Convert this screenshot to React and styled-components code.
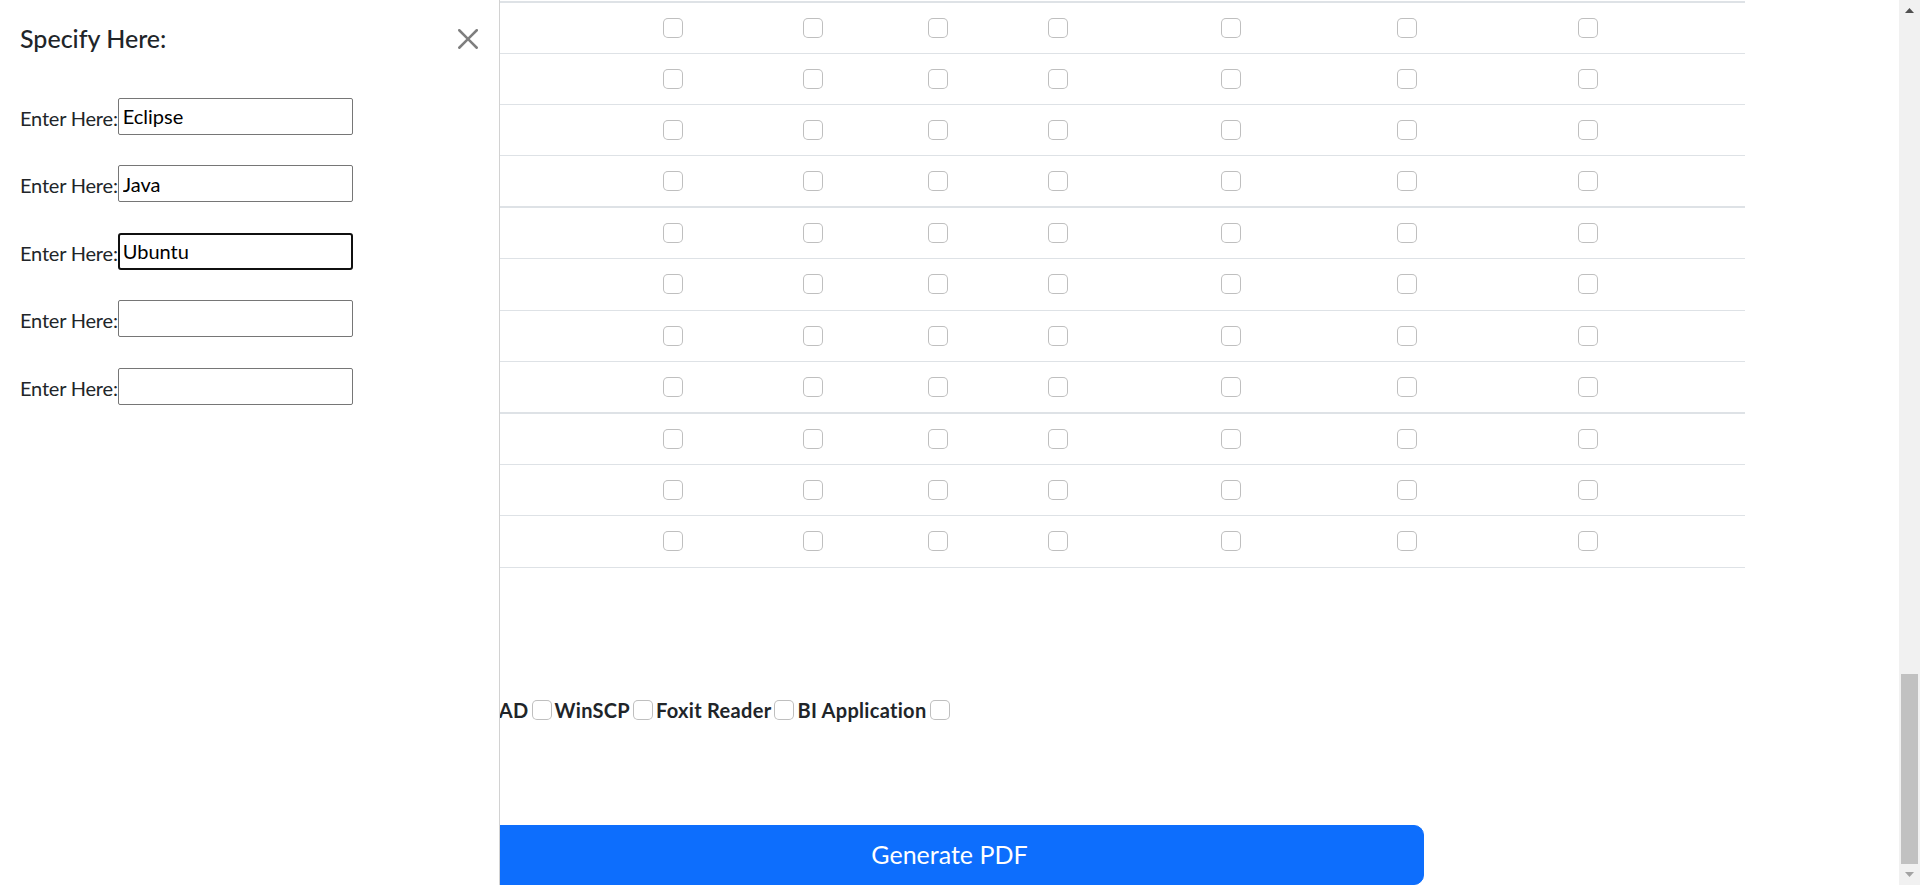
import React, { useLayoutEffect, useRef } from 'react';
import styled, { createGlobalStyle } from 'styled-components';

const GlobalStyle = createGlobalStyle`
  html, body {
    margin: 0;
    padding: 0;
    height: 100%;
    overflow: hidden;
  }
  body {
    font-family: Lato, "Segoe UI", "Liberation Sans", sans-serif;
    color: #212529;
    background: #fff;
  }
  * { box-sizing: border-box; }
`;

const Shell = styled.div`
  display: flex;
  height: 100vh;
`;

const Viewport = styled.div`
  flex: 1;
  min-width: 0;
  overflow-y: scroll;
  scrollbar-width: none;

  &::-webkit-scrollbar {
    display: none;
  }
`;

const ScrollBar = styled.div`
  width: 21px;
  flex-shrink: 0;
  background: #f1f1f1;
  display: flex;
  flex-direction: column;
`;

const ScrollArrow = styled.div`
  height: 21px;
  display: flex;
  align-items: center;
  justify-content: center;

  svg {
    width: 9px;
    height: 5px;
    fill: ${p => (p.$disabled ? '#a3a3a3' : '#505050')};
  }
`;

const ScrollTrack = styled.div`
  flex: 1;
  padding: 0 2px;
  display: flex;
  flex-direction: column;
  justify-content: flex-end;
`;

const ScrollThumb = styled.div`
  height: 190px;
  background: #c1c1c1;
`;

const Page = styled.main`
  padding-top: 40px;
`;

const Heading = styled.h2`
  margin: 0 0 40px;
  font-size: 36px;
  line-height: 45px;
  font-weight: 500;
  text-align: center;
`;

const Table = styled.table`
  width: 1591px;
  margin: 0 auto;
  border-collapse: collapse;
  table-layout: fixed;
  font-size: 20px;
`;

const HeadCell = styled.th`
  padding: 10px;
  line-height: 30px;
  font-weight: 700;
  text-align: ${p => (p.$left ? 'left' : 'center')};
  white-space: nowrap;
  overflow: hidden;
  text-overflow: ellipsis;
  border-bottom: 2px solid #dee2e6;
`;

const Row = styled.tr`
  & > td {
    border-bottom: 1px solid #dee2e6;
    border-top: ${p => (p.$groupStart ? '2px solid #dee2e6' : 'none')};
  }
`;

const Cell = styled.td`
  padding: 15px 10px 15.2px;
  line-height: 20px;
  text-align: ${p => (p.$left ? 'left' : 'center')};
  white-space: nowrap;
  overflow: hidden;
`;

const Check = styled.input.attrs({ type: 'checkbox' })`
  appearance: none;
  -webkit-appearance: none;
  display: ${p => (p.$inline ? 'inline-block' : 'block')};
  width: 20px;
  height: 20px;
  margin: ${p => (p.$inline ? '0' : '0 auto')};
  background: #fff;
  border: 1px solid rgba(0, 0, 0, 0.25);
  border-radius: 5px;
  flex-shrink: 0;
`;

const OptionsRow = styled.div`
  width: 50%;
  height: 30px;
  margin: 127px 0 100px;
  display: flex;
  justify-content: flex-end;
  align-items: center;
  gap: 3px;
`;

const OptionLabel = styled.span`
  font-size: 20px;
  font-weight: 700;
  line-height: 30px;
  letter-spacing: 0.3px;
  white-space: nowrap;
`;

const GenerateButton = styled.button`
  display: block;
  width: 50%;
  height: 60px;
  margin: 0 auto;
  padding: 10px 20px;
  background: #0d6efd;
  border: 1px solid #0d6efd;
  border-radius: 10px;
  color: #fff;
  font-family: inherit;
  font-size: 25px;
  line-height: 37.5px;
  cursor: pointer;
`;

const Offcanvas = styled.aside`
  position: fixed;
  top: 0;
  left: 0;
  bottom: 0;
  width: 500px;
  z-index: 10;
  background: #fff;
  border-right: 1px solid rgba(0, 0, 0, 0.175);
  display: flex;
  flex-direction: column;
`;

const OffcanvasHeader = styled.div`
  display: flex;
  align-items: center;
  justify-content: space-between;
  padding: 20px;
`;

const OffcanvasTitle = styled.h5`
  margin: 0;
  font-size: 25px;
  font-weight: 500;
  line-height: 1.5;
`;

const CloseButton = styled.button`
  width: 20px;
  height: 20px;
  padding: 0;
  margin-right: 1px;
  border: 0;
  background: transparent;
  opacity: 0.5;
  cursor: pointer;
  display: flex;

  svg {
    width: 20px;
    height: 20px;
  }
`;

const OffcanvasBody = styled.div`
  flex: 1;
  padding: 20px;
  display: flex;
  flex-direction: column;
  gap: 30.5px;
`;

const FieldRow = styled.div`
  display: flex;
  align-items: center;
  height: 37px;
`;

const FieldLabel = styled.label`
  font-size: 20px;
  line-height: 30px;
  letter-spacing: -0.2px;
  margin-top: 3px;
`;

const TextInput = styled.input`
  width: 235px;
  height: 37px;
  padding: 0 ${p => (p.$focused ? '3px' : '4px')};
  border: ${p => (p.$focused ? '2px solid #101010' : '1px solid #767676')};
  border-radius: ${p => (p.$focused ? '3px' : '2px')};
  font-family: inherit;
  font-size: 20px;
  color: #000;
  background: #fff;
  outline: none;
`;

const columns = [
  { title: 'S.No', width: 80, left: true },
  { title: 'Employee Name', width: 325, left: true },
  { title: 'MS Office', width: 228 },
  { title: 'VLC', width: 52 },
  { title: 'Chrome', width: 198 },
  { title: 'Zip', width: 42 },
  { title: 'Adobe Acrobat', width: 304 },
  { title: 'VPN', width: 48 },
  { title: 'Anti Virus', width: 314 }
];

const names = ['Ravi Kumar', 'Anita Sharma', 'Suresh Patel', 'Priya Nair', 'Arjun Singh', 'Meena Iyer', 'Karan Mehta', 'Divya Rao'];

const rows = Array.from({ length: 67 }, (_, i) => ({
  id: i + 1,
  name: names[i % names.length]
}));

const options = ['MS Teams', 'Notepad++', 'AutoCAD', 'WinSCP', 'Foxit Reader', 'BI Application'];

const fields = ['Eclipse', 'Java', 'Ubuntu', '', ''];

const CloseIcon = () => (
  <svg viewBox="0 0 16 16" fill="#000">
    <path d="M.293.293a1 1 0 0 1 1.414 0L8 6.586 14.293.293a1 1 0 1 1 1.414 1.414L9.414 8l6.293 6.293a1 1 0 0 1-1.414 1.414L8 9.414l-6.293 6.293a1 1 0 0 1-1.414-1.414L6.586 8 .293 1.707a1 1 0 0 1 0-1.414z" />
  </svg>
);

const App = () => {
  const viewRef = useRef(null);

  useLayoutEffect(() => {
    const el = viewRef.current;
    if (el) el.scrollTop = el.scrollHeight;
  }, []);

  return (
    <>
      <GlobalStyle />
      <Shell>
        <Viewport ref={viewRef}>
          <Page>
            <Heading>Software Requirement Form</Heading>
            <Table>
              <colgroup>
                {columns.map(col => (
                  <col key={col.title} style={{ width: col.width }} />
                ))}
              </colgroup>
              <thead>
                <tr>
                  {columns.map(col => (
                    <HeadCell key={col.title} $left={col.left}>{col.title}</HeadCell>
                  ))}
                </tr>
              </thead>
              <tbody>
                {rows.map((row, i) => (
                  <Row key={row.id} $groupStart={i % 4 === 0}>
                    <Cell $left>{row.id}</Cell>
                    <Cell $left>{row.name}</Cell>
                    {columns.slice(2).map(col => (
                      <Cell key={col.title}>
                        <Check />
                      </Cell>
                    ))}
                  </Row>
                ))}
              </tbody>
            </Table>

            <OptionsRow>
              {options.map(opt => (
                <React.Fragment key={opt}>
                  <OptionLabel>{opt}</OptionLabel>
                  <Check $inline />
                </React.Fragment>
              ))}
            </OptionsRow>

            <GenerateButton>Generate PDF</GenerateButton>
          </Page>
        </Viewport>

        <ScrollBar>
          <ScrollArrow>
            <svg viewBox="0 0 9 5"><path d="M0 5h9L4.5 0z" /></svg>
          </ScrollArrow>
          <ScrollTrack>
            <ScrollThumb />
          </ScrollTrack>
          <ScrollArrow $disabled>
            <svg viewBox="0 0 9 5"><path d="M0 0h9L4.5 5z" /></svg>
          </ScrollArrow>
        </ScrollBar>
      </Shell>

      <Offcanvas>
        <OffcanvasHeader>
          <OffcanvasTitle>Specify Here:</OffcanvasTitle>
          <CloseButton aria-label="Close">
            <CloseIcon />
          </CloseButton>
        </OffcanvasHeader>
        <OffcanvasBody>
          {fields.map((value, i) => (
            <FieldRow key={i}>
              <FieldLabel>Enter Here:</FieldLabel>
              <TextInput defaultValue={value} $focused={i === 2} />
            </FieldRow>
          ))}
        </OffcanvasBody>
      </Offcanvas>
    </>
  );
};

export default App;
